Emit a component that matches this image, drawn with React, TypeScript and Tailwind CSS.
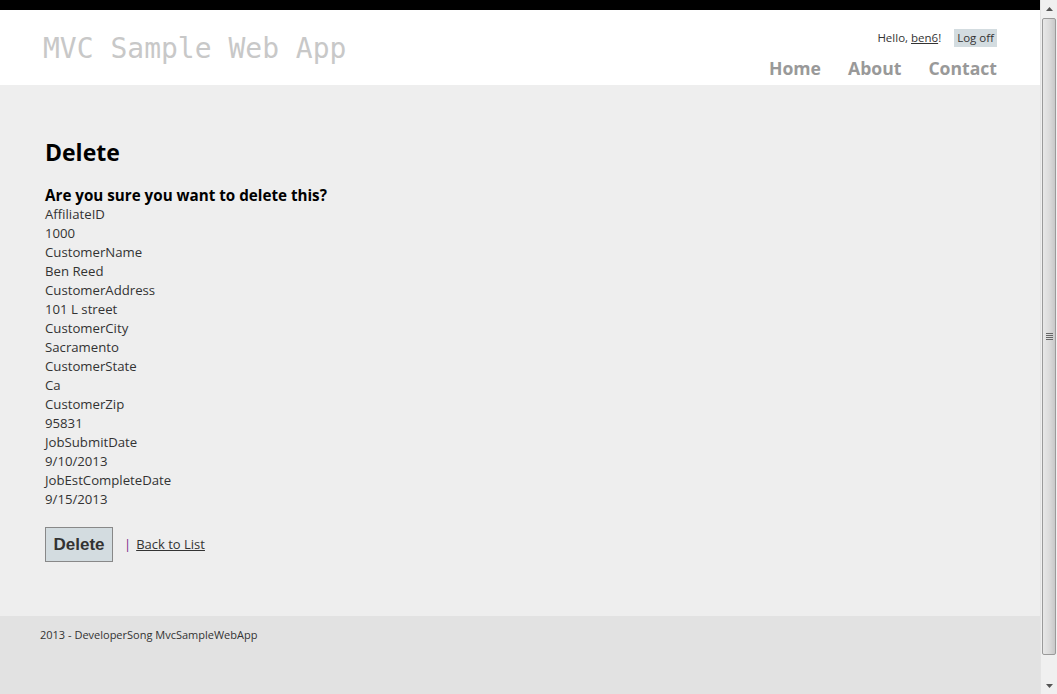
import React from 'react';

const fields: [string, string][] = [
  ['AffiliateID', '1000'],
  ['CustomerName', 'Ben Reed'],
  ['CustomerAddress', '101 L street'],
  ['CustomerCity', 'Sacramento'],
  ['CustomerState', 'Ca'],
  ['CustomerZip', '95831'],
  ['JobSubmitDate', '9/10/2013'],
  ['JobEstCompleteDate', '9/15/2013'],
];

const Scrollbar = () => (
  <div className="w-[17px] h-[694px] bg-[#f0f0f0] flex flex-col border-l border-[#e4e4e4]">
    <div className="h-[17px] flex items-center justify-center">
      <svg width="7" height="4" viewBox="0 0 7 4"><path d="M0 4 L3.5 0 L7 4 Z" fill="#555" /></svg>
    </div>
    <div className="flex-1 px-[1px] py-[1px] flex flex-col">
      <div className="h-[637px] rounded-[2px] border border-[#9a9a9a] bg-gradient-to-r from-[#e8e8e8] via-[#dcdcdc] to-[#c8c8c8] flex items-center justify-center">
        <div className="flex flex-col gap-[1px]">
          <div className="w-[7px] h-[1px] bg-[#666]" />
          <div className="w-[7px] h-[1px] bg-[#666]" />
          <div className="w-[7px] h-[1px] bg-[#666]" />
          <div className="w-[7px] h-[1px] bg-[#666]" />
        </div>
      </div>
    </div>
    <div className="h-[17px] flex items-center justify-center">
      <svg width="7" height="4" viewBox="0 0 7 4"><path d="M0 0 L3.5 4 L7 0 Z" fill="#555" /></svg>
    </div>
  </div>
);

const App = () => {
  return (
    <div className="w-[1057px] h-[694px] flex overflow-hidden" style={{ fontFamily: '"Open Sans", "Noto Sans", sans-serif' }}>
      <div className="w-[1040px] h-[694px] flex flex-col">
        <div className="h-[10px] bg-black" />

        {/* Header */}
        <header className="h-[75px] bg-white flex justify-between pl-[43px] pr-[43px]">
          <div className="pt-[20px] text-[28px] leading-[38px] text-[#c8c8c8]" style={{ fontFamily: '"DejaVu Sans Mono", monospace' }}>
            MVC Sample Web App
          </div>
          <div className="flex flex-col items-end pt-[19px]">
            <div className="flex items-center text-[11.5px] leading-[18px] text-[#333]">
              <span>Hello, <a className="underline text-[#333]">ben6</a>!</span>
              <span className="ml-[13px] bg-[#d3dce0] px-[3px] h-[18px] leading-[18px]">Log off</span>
            </div>
            <nav className="flex gap-[27px] mt-[9px] text-[17.6px] leading-[24px] font-bold text-[#999]">
              <span>Home</span>
              <span>About</span>
              <span>Contact</span>
            </nav>
          </div>
        </header>

        {/* Main */}
        <main className="h-[531px] bg-[#eeeeee] pl-[45px] pt-[51px] text-[#333]">
          <h2 className="text-[23px] leading-[32px] font-bold text-black">Delete</h2>
          <h3 className="mt-[17px] text-[15.2px] leading-[20px] font-bold text-black">Are you sure you want to delete this?</h3>
          <div className="text-[13.2px] leading-[19px]">
            {fields.map(([k, v]) => (
              <React.Fragment key={k}>
                <div>{k}</div>
                <div>{v}</div>
              </React.Fragment>
            ))}
          </div>
          <div className="mt-[18px] flex items-center">
            <button className="w-[68px] h-[35px] bg-[#d3dce0] border border-[#888] text-[17px] font-bold text-[#333]" style={{ fontFamily: '"Liberation Sans", Arial, sans-serif' }}>
              Delete
            </button>
            <span className="ml-[11px] text-[13px] text-[#7b2a8b]">|</span>
            <a className="ml-[5px] text-[13px] underline text-[#333]">Back to List</a>
          </div>
        </main>

        {/* Footer */}
        <footer className="flex-1 bg-[#e2e2e2] pl-[40px] pt-[11px]">
          <p className="text-[11px] leading-[15px] text-[#333]">2013 - DeveloperSong MvcSampleWebApp</p>
        </footer>
      </div>
      <Scrollbar />
    </div>
  );
};

export default App;
